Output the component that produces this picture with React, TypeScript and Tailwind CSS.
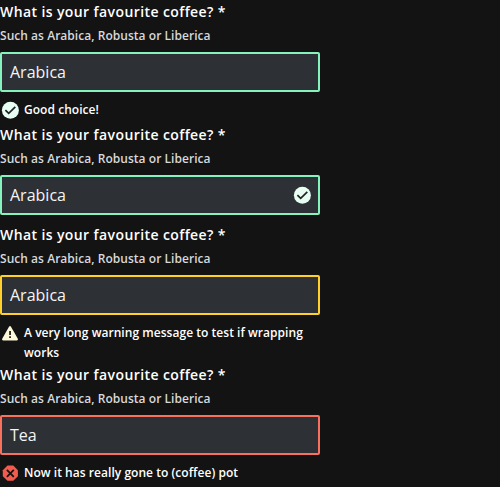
import React from "react";

type Status = "success" | "warning" | "error";

const borders: Record<Status, string> = {
  success: "border-[#86f2bd]",
  warning: "border-[#ffd02b]",
  error: "border-[#f9705f]",
};

function StatusIcon({ status }: { status: Status }) {
  if (status === "success") {
    return (
      <svg viewBox="0 0 20 20" className="size-5 shrink-0 overflow-visible">
        <circle cx="10.4" cy="10.2" r="8.5" fill="#e7fef2" />
        <path d="M5.4 10.1l3.3 3.3 6.6-6.6" fill="none" stroke="#202327" strokeWidth="1.7" />
      </svg>
    );
  }
  if (status === "warning") {
    return (
      <svg viewBox="0 0 20 20" className="size-5 shrink-0 overflow-visible">
        <path
          d="M9 3.8q1-1.5 2 0l6.8 12q.7 1.6-1 1.7H3.2q-1.7-.1-1-1.7z"
          fill="#fff9dc"
        />
        <path d="M9.2 8h1.7v3.9H9.2zM9.2 13.3h1.7V15H9.2z" fill="#131313" />
      </svg>
    );
  }
  return (
    <svg viewBox="0 0 20 20" className="size-5 shrink-0 overflow-visible">
      <path
        d="M7.5 2.6h5.8l4.6 4.7v5.9l-4.6 4.6H7.5l-4.7-4.6V7.3z"
        fill="#f45b4c"
      />
      <path d="M6.9 6.9l6.9 6.9M13.8 6.9l-6.9 6.9" stroke="#131313" strokeWidth="1.8" />
    </svg>
  );
}

interface FieldProps {
  value: string;
  status: Status;
  message?: string;
}

function Field({ value, status, message }: FieldProps) {
  return (
    <div className="w-80 pb-[3px]">
      <div className="h-6 text-[14px] leading-6 font-semibold tracking-[0.4px] text-white">
        What is your favourite coffee? *
      </div>
      <div className="h-7 text-[12px] leading-[23px] font-semibold tracking-[0.04px] text-[#d7d9dc]">
        Such as Arabica, Robusta or Liberica
      </div>
      <div
        className={`flex h-10 items-center justify-between rounded-[2px] border-2 bg-[#2d3035] px-2 ${borders[status]}`}
      >
        <span className="text-base leading-6 text-[#f4f5f6]">{value}</span>
        {!message && (
          <span className="-mr-1.5 w-5 -translate-x-1">
            <StatusIcon status={status} />
          </span>
        )}
      </div>
      {message && (
        <div className="mt-2 flex items-start gap-1">
          <StatusIcon status={status} />
          <span className="text-[12px] leading-5 font-semibold tracking-[0.04px] text-white">
            {message}
          </span>
        </div>
      )}
    </div>
  );
}

export default function App() {
  return (
    <main className="h-[487px] w-[500px] overflow-hidden bg-[#131313] font-['Open_Sans',sans-serif]">
      <Field value="Arabica" status="success" message="Good choice!" />
      <div className="h-[100px]">
        <Field value="Arabica" status="success" />
      </div>
      <div className="h-[140px]">
        <Field
          value="Arabica"
          status="warning"
          message="A very long warning message to test if wrapping works"
        />
      </div>
      <Field value="Tea" status="error" message="Now it has really gone to (coffee) pot" />
    </main>
  );
}
